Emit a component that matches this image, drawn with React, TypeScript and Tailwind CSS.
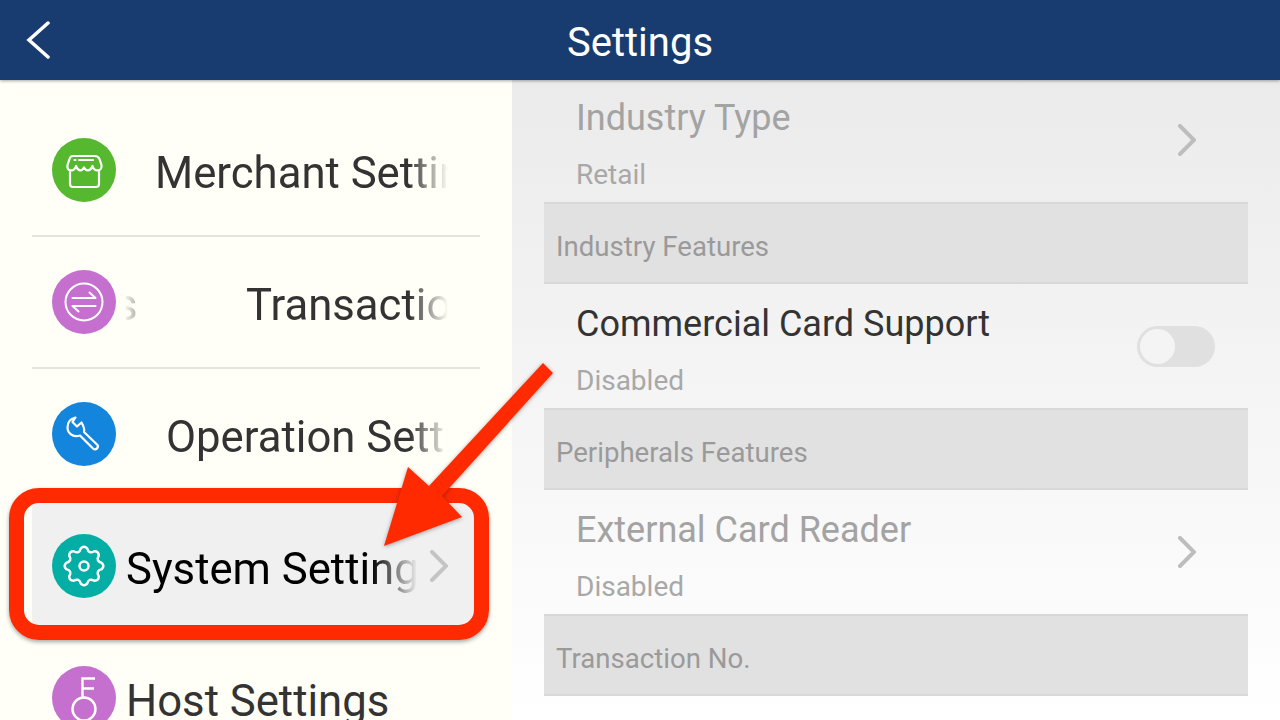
import React from 'react';

const roboto = 'font-["Roboto",sans-serif]';

const Chevron = ({ className }: { className: string }) => (
  <svg viewBox="0 0 18 32" className={className} fill="none" stroke="currentColor" strokeWidth="4" strokeLinecap="round" strokeLinejoin="miter">
    <path d="M2 2 L16 16 L2 30" />
  </svg>
);

const StoreIcon = () => (
  <svg viewBox="0 0 64 64" className="h-16 w-16" fill="none" stroke="white" strokeWidth="2.200" strokeLinecap="round" strokeLinejoin="round">
    <path d="M21 18 H43 C45.500 18 46.500 19 47.500 21 L49.500 27 C50.500 33 43 35 40.500 28 C38.500 33.500 34 33.500 32 29.500 C30 33.500 26 33.500 24 28 C21.500 35 14.500 33 15.500 27 L17.500 21 C18 19 19 18 21 18 Z" />
    <path d="M22.500 22 H23.500 M27 22 H41" />
    <path d="M18 34 V46 C18 48 19 49 21 49 H44 C46 49 47 48 47 46 V34" />
  </svg>
);

const SwapIcon = () => (
  <svg viewBox="0 0 64 64" className="h-16 w-16" fill="none" stroke="white" strokeWidth="2" strokeLinecap="round" strokeLinejoin="round">
    <circle cx="32" cy="32" r="18.500" />
    <path d="M20.500 28 H43.500 L37.500 22.500" />
    <path d="M43.500 36 H20.500 L26.500 41.500" />
  </svg>
);

const WrenchIcon = () => (
  <svg viewBox="0 0 64 64" className="h-16 w-16" fill="none" stroke="white" strokeWidth="2.200" strokeLinecap="round" strokeLinejoin="round">
    <path d="M23.500 15.500 L20.500 20 L25 24.500 L29.500 20.500 C31.500 24 33 27 32 30 L45 42.500 C47.500 45 44 49 41 46.500 L28 33.500 C22 35.500 15.500 32 15.500 25.500 C15.500 20 19 16.500 23.500 15.500 Z" />
  </svg>
);

// scalloped outline, 8 teeth
const gearPath = () => {
  const at = (deg: number, r: number) => {
    const rad = (deg * Math.PI) / 180;
    return `${(32 + r * Math.cos(rad)).toFixed(2)} ${(32 + r * Math.sin(rad)).toFixed(2)}`;
  };
  let d = `M${at(-10, 18)}`;
  for (let i = 0; i < 8; i++) {
    const a = i * 45;
    d += ` Q${at(a, 21)} ${at(a + 10, 18)} Q${at(a + 22.5, 12.5)} ${at(a + 35, 18)}`;
  }
  return d + ' Z';
};

const GearIcon = () => (
  <svg viewBox="0 0 64 64" className="h-16 w-16" fill="none" stroke="white" strokeWidth="2.500" strokeLinejoin="round">
    <path d={gearPath()} />
    <circle cx="32" cy="32" r="4.500" />
  </svg>
);

const KeyIcon = () => (
  <svg viewBox="0 0 64 64" className="h-16 w-16" fill="none" stroke="white" strokeWidth="2.400">
    <circle cx="32" cy="43" r="11.500" />
    <path d="M30.500 31 V12.500 H43 M30.500 22.500 H42" />
  </svg>
);

type MenuRow = {
  label: string;
  color: string;
  icon: React.ReactNode;
  textClass: string;
  rowClass: string;
  ghost?: boolean;
  selected?: boolean;
};

const divided = 'border-b-2 border-[#e4e4dd]';

const menu: MenuRow[] = [
  { label: 'Merchant Settings', color: 'bg-[#55b82f]', icon: <StoreIcon />, textClass: 'ml-[29px] text-[#333333]', rowClass: divided },
  { label: 'Transaction Settings', color: 'bg-[#c56fce]', icon: <SwapIcon />, textClass: 'ml-[110px] text-[#333333]', rowClass: divided, ghost: true },
  { label: 'Operation Settings', color: 'bg-[#1385dc]', icon: <WrenchIcon />, textClass: 'ml-[40px] text-[#333333]', rowClass: '-mt-px' },
  { label: 'System Settings', color: 'bg-[#05aea4]', icon: <GearIcon />, textClass: 'text-black', rowClass: 'bg-[#f0f0f1]', selected: true },
  { label: 'Host Settings', color: 'bg-[#c56fce]', icon: <KeyIcon />, textClass: 'text-[#333333]', rowClass: '' },
];

const MenuItem = ({ row }: { row: MenuRow }) => (
  <div className={`mx-8 flex h-[132px] shrink-0 items-center pl-5 ${row.rowClass}`}>
    <div className={`flex h-16 w-16 shrink-0 items-center justify-center rounded-full ${row.color}`}>{row.icon}</div>
    <div
      className={`ml-2.5 flex overflow-hidden whitespace-nowrap pt-[6px] text-[43.7px] leading-[60px] ${row.selected ? 'w-[292px] [mask-image:linear-gradient(to_right,black_84%,transparent_100%)]' : 'w-[322px]'} ${row.selected || row.label === 'Host Settings' ? '' : '[mask-image:linear-gradient(to_right,black_88%,transparent_100%)]'}`}
    >
      {row.ghost && <span className="-ml-[11px] w-[21px] shrink-0 text-[#b5b5b0] [mask-image:linear-gradient(to_right,transparent_40%,black)]">s</span>}
      <span className={row.textClass}>{row.label}</span>
    </div>
    {row.selected && <Chevron className="ml-[12px] h-8 w-[18px] text-[#c4c4c4]" />}
  </div>
);

const SectionHeader = ({ label }: { label: string }) => (
  <div className="flex h-[82px] items-center border-y-2 border-[#d8d8d8] bg-[#e1e1e1] pl-3 pt-2 text-[27.6px] text-[#9a9a9a]">{label}</div>
);

const SettingRow = ({ title, sub, muted, trailing }: { title: string; sub: string; muted?: boolean; trailing: React.ReactNode }) => (
  <div className="flex h-[124px] items-center justify-between pl-8">
    <div className="flex flex-col pt-[6px]">
      <span className={`text-[36px] leading-[44px] ${muted ? 'text-[#a3a3a3]' : 'text-[#333333]'}`}>{title}</span>
      <span className="mt-[19px] text-[28px] leading-[32px] text-[#a8a8a8]">{sub}</span>
    </div>
    {trailing}
  </div>
);

const Arrowhead = () => <Chevron className="mr-[52px] h-8 w-[18px] text-[#bdbdbd]" />;

export default function App() {
  return (
    <div className={`relative flex h-[720px] w-[1280px] flex-col overflow-hidden ${roboto}`}>
      <header className="relative z-10 flex h-20 shrink-0 items-center justify-center bg-[#193c70] shadow-[0_1px_3px_rgba(0,0,0,0.35)]">
        <svg viewBox="0 0 24 38" className="absolute left-[26px] top-[21px] h-[38px] w-6" fill="none" stroke="white" strokeWidth="3.500" strokeLinecap="round">
          <path d="M22 2 L3 19 L22 36" />
        </svg>
        <h1 className="pt-[5px] text-[40px] font-normal text-white">Settings</h1>
      </header>

      <div className="flex min-h-0 flex-1">
        <nav className="flex w-[512px] shrink-0 flex-col overflow-hidden bg-[#fffff8] pt-[25px]">
          {menu.map((row) => (
            <MenuItem key={row.label} row={row} />
          ))}
        </nav>

        <main className="flex-1 overflow-hidden bg-linear-to-b from-[#ebebeb] to-white pl-8 pr-8">
          <div className="-mt-[2px] flex flex-col">
            <SettingRow title="Industry Type" sub="Retail" muted trailing={<Arrowhead />} />
            <SectionHeader label="Industry Features" />
            <SettingRow
              title="Commercial Card Support"
              sub="Disabled"
              trailing={
                <div className="mr-[33px] flex h-[41px] w-[78px] items-center rounded-full bg-[#e0e0e0] pl-[3px]">
                  <div className="h-[35px] w-[35px] rounded-full bg-[#f4f4f4]" />
                </div>
              }
            />
            <SectionHeader label="Peripherals Features" />
            <SettingRow title="External Card Reader" sub="Disabled" muted trailing={<Arrowhead />} />
            <SectionHeader label="Transaction No." />
          </div>
        </main>
      </div>

      {/* annotation over the screenshot */}
      <div className="absolute left-[9px] top-[488px] h-[152px] w-[480px] rounded-[30px] border-[15px] border-[#ff2a00] shadow-[0_2px_4px_rgba(0,0,0,0.35)]" />
      <svg viewBox="0 0 1280 720" className="absolute left-0 top-0 h-[720px] w-[1280px] drop-shadow-[0_1px_2px_rgba(0,0,0,0.35)]">
        <polygon points="543,363 553,373 442,496 462,517 384,546 408,467 429,486" fill="#ff2a00" />
      </svg>
    </div>
  );
}
